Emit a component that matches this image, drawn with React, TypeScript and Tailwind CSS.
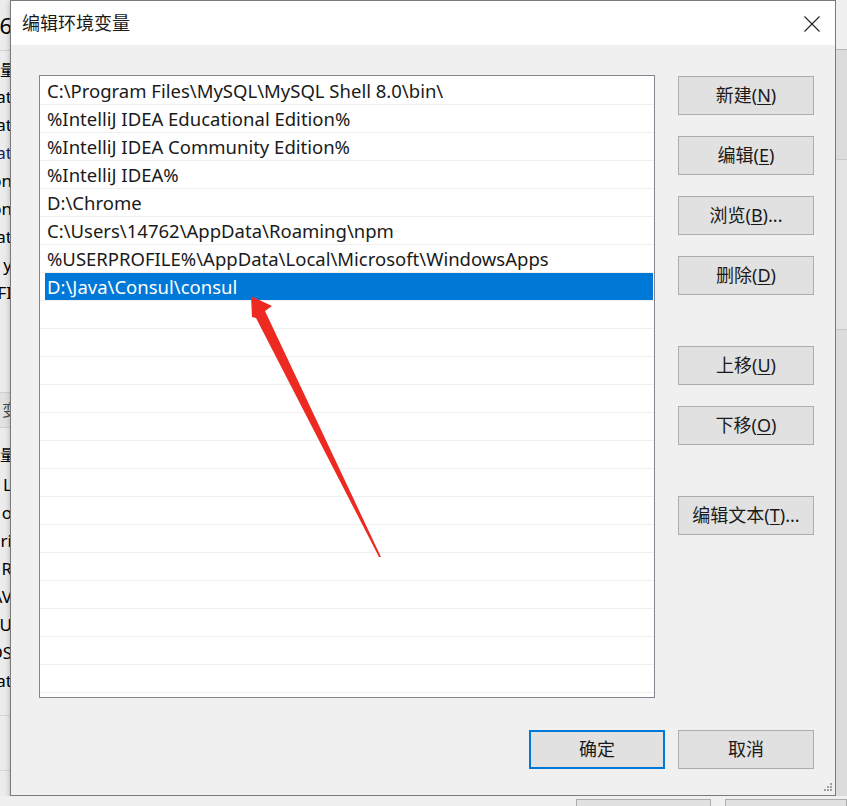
import React from "react";

const font = { fontFamily: '"Noto Sans", "Noto Sans CJK SC", sans-serif' };

const paths = [
  "C:\\Program Files\\MySQL\\MySQL Shell 8.0\\bin\\",
  "%IntelliJ IDEA Educational Edition%",
  "%IntelliJ IDEA Community Edition%",
  "%IntelliJ IDEA%",
  "D:\\Chrome",
  "C:\\Users\\14762\\AppData\\Roaming\\npm",
  "%USERPROFILE%\\AppData\\Local\\Microsoft\\WindowsApps",
  "D:\\Java\\Consul\\consul",
];

const selected = 7;

function Btn({ label, hot, suffix = "", primary = false }: { label: string; hot?: string; suffix?: string; primary?: boolean }) {
  return (
    <div
      className={
        "flex h-[39px] w-[136px] items-center justify-center bg-[#e1e1e1] text-[18px] text-[#1a1a1a] " +
        (primary ? "border-2 border-[#0078d7]" : "border border-[#adadad]")
      }
    >
      {label}
      {hot && (
        <>
          (<span className="underline underline-offset-2">{hot}</span>){suffix}
        </>
      )}
    </div>
  );
}

const leftTop = ["at", "at", "at", "on", "on", "at", "y", "FI"];
const leftBottom = ["L", "o", "ri", "R", "AV", "U", "OS", "at"];

export default function App() {
  return (
    <div className="flex h-[806px] w-[847px] flex-col overflow-hidden bg-[#f0f0f0]" style={font}>
      <div className="flex h-[796px]">
        {/* behind window, left edge */}
        <div className="flex w-[10px] flex-col overflow-hidden bg-[#ececec] text-[17px] text-black">
          <div className="flex h-[50px] items-center justify-end whitespace-nowrap text-[22px]">
            <span className="mr-[-2px]">6</span>
          </div>
          <div className="h-[7px] border-t border-[#d0d0d0]" />
          <div className="flex h-[26px] items-center justify-end whitespace-nowrap text-[16px]">
            <span className="mr-[-6px]">变量</span>
          </div>
          {leftTop.map((t, i) => (
            <div key={i} className="flex h-[28px] items-center justify-end whitespace-nowrap">
              <span className={"mr-[-2px] " + (i === 2 ? "text-[#1b1b6a]" : "")}>{t}</span>
            </div>
          ))}
          <div className="h-[85px]" />
          <div className="flex h-[36px] items-center justify-end whitespace-nowrap border-y border-[#d0d0d0] bg-[#e2e2e2] text-[16px] text-[#444]">
            <span className="mr-[-8px]">变</span>
          </div>
          <div className="h-[13px]" />
          <div className="flex h-[28px] items-center justify-end whitespace-nowrap text-[16px]">
            <span className="mr-[-6px]">变量</span>
          </div>
          <div className="h-[2px]" />
          {leftBottom.map((t, i) => (
            <div key={i} className="flex h-[28px] items-center justify-end whitespace-nowrap">
              <span className="mr-[-2px]">{t}</span>
            </div>
          ))}
          <div className="mt-[20px] h-[56px] border-y border-[#d6d6d6]" />
        </div>

        {/* dialog */}
        <div className="flex w-[826px] flex-col border border-[#7a7a7a] bg-[#f0f0f0] shadow-[0_2px_6px_rgba(0,0,0,0.25)]">
          <div className="flex h-[44px] items-center justify-between bg-white pl-[11px] pr-[14px]">
            <span className="text-[18px] text-[#1a1a1a]">编辑环境变量</span>
            <svg width="18" height="18" viewBox="0 0 18 18" className="mt-[1px]">
              <path d="M1.5 1.5 L16.5 16.5 M16.5 1.5 L1.5 16.5" stroke="#222" strokeWidth="1.1" />
            </svg>
          </div>

          <div className="flex flex-1 flex-col pl-[28px] pr-[21px] pt-[30px]">
            <div className="flex">
              <div className="relative h-[623px] w-[616px] overflow-hidden border border-[#828790] bg-white pt-[1px]">
                {Array.from({ length: 23 }).map((_, i) => (
                  <div key={i} className="flex h-[28px] border-b border-[#f0f0f0]">
                    <div
                      className={
                        "flex flex-1 items-center whitespace-nowrap text-[18.5px] " +
                        (i === selected ? "ml-[5px] mr-[1px] bg-[#0078d7] pl-[2px] text-white" : "pl-[7px] text-[#1a1a1a]")
                      }
                    >
                      {paths[i] ?? ""}
                    </div>
                  </div>
                ))}
              </div>

              <div className="ml-[23px] flex flex-col pt-[1px]">
                <div className="flex flex-col gap-[21px]">
                  <Btn label="新建" hot="N" />
                  <Btn label="编辑" hot="E" />
                  <Btn label="浏览" hot="B" suffix="..." />
                  <Btn label="删除" hot="D" />
                </div>
                <div className="mt-[51px] flex flex-col gap-[21px]">
                  <Btn label="上移" hot="U" />
                  <Btn label="下移" hot="O" />
                </div>
                <div className="mt-[51px]">
                  <Btn label="编辑文本" hot="T" suffix="..." />
                </div>
              </div>
            </div>

            <div className="mt-[32px] flex justify-end gap-[13px]">
              <Btn label="确定" primary />
              <Btn label="取消" />
            </div>
            <div className="mt-auto flex justify-end pb-[1px] pr-0">
              <svg width="12" height="12" viewBox="0 0 12 12" className="mr-[-19px]">
                <g fill="#a0a0a0">
                  <rect x="9" y="1" width="2" height="2" />
                  <rect x="6" y="4" width="2" height="2" />
                  <rect x="9" y="4" width="2" height="2" />
                  <rect x="3" y="7" width="2" height="2" />
                  <rect x="6" y="7" width="2" height="2" />
                  <rect x="9" y="7" width="2" height="2" />
                </g>
              </svg>
            </div>
          </div>
        </div>

        {/* behind window, right edge */}
        <div className="flex flex-1 flex-col bg-[#dcdcdc]">
          <div className="h-[50px] border-b border-[#b8b8b8] bg-[#f0f0f0]" />
          <div className="h-[110px] border-b border-[#c8c8c8]" />
          <div className="h-[170px] border-b border-[#c8c8c8] bg-[#e4e4e4]" />
          <div className="flex-1" />
        </div>
      </div>

      {/* behind window, bottom edge */}
      <div className="flex h-[10px] bg-[#f0f0f0] pl-[576px]">
        <div className="mt-[3px] h-full w-[135px] border border-[#adadad] bg-[#e1e1e1]" />
        <div className="ml-[14px] mt-[3px] h-full flex-1 border border-[#adadad] bg-[#e1e1e1]" />
      </div>

      {/* annotation arrow over the list */}
      <svg className="pointer-events-none absolute left-0 top-0" width="847" height="806">
        <polygon
          points="251,296 272,306 265,311 381,557 379,557 256,318 252,317"
          fill="#ec2a22"
        />
      </svg>
    </div>
  );
}
